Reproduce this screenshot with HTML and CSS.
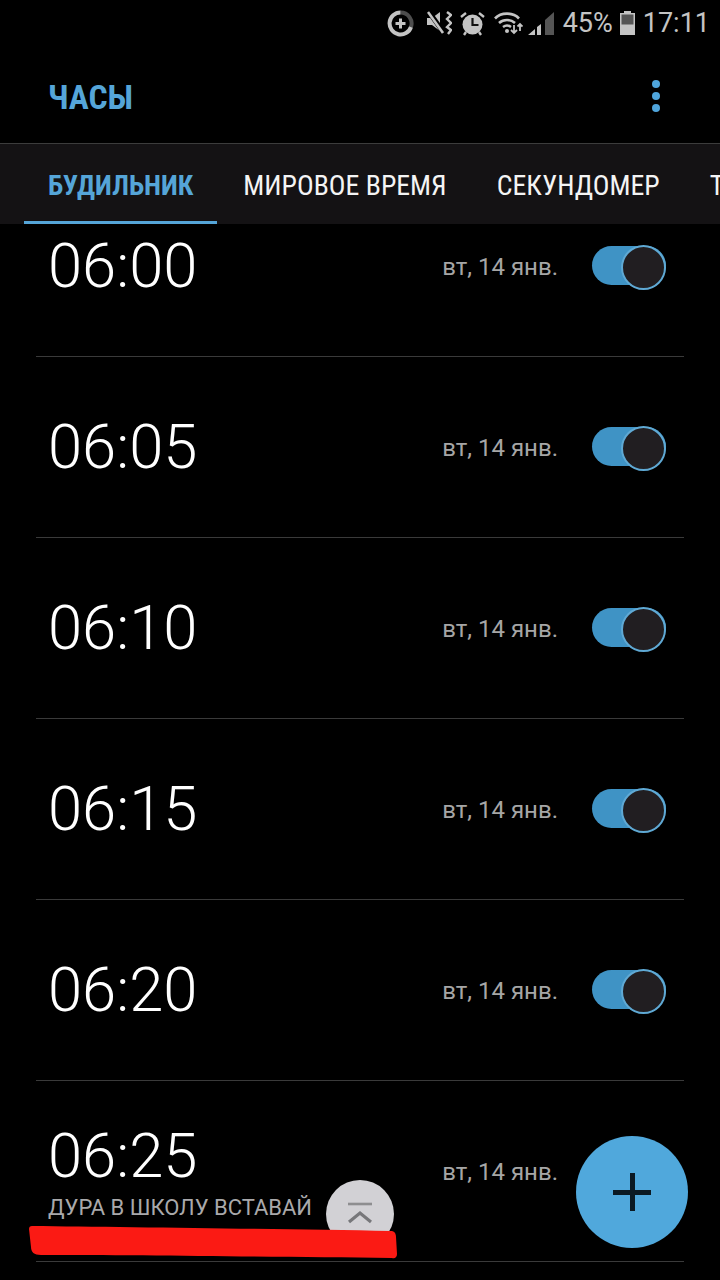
FILE: index.html
```html
<!DOCTYPE html>
<html lang="ru">
<head>
<meta charset="utf-8">
<title>Часы</title>
<link rel="stylesheet" href="styles.css">
</head>
<body>
<div class="screen">
  <div class="status">
    <svg class="ico ico-data" width="27" height="27" viewBox="0 0 27 27" fill="none">
      <path d="M13.5 2.5A11 11 0 0 1 24 17" stroke="#4d4d4d" stroke-width="4"/>
      <path d="M24 17A11 11 0 1 1 13.5 2.5" stroke="#c4c4c4" stroke-width="4"/>
      <path d="M13.5 8.5v10M8.5 13.5h10" stroke="#c4c4c4" stroke-width="3"/>
    </svg>
    <svg class="ico ico-mute" width="25" height="24" viewBox="0 0 25 24" fill="none">
      <path d="M0 7h5l8-6v19l-8-6H0z" fill="#c4c4c4"/>
      <path d="M2 1l15 21" stroke="#000" stroke-width="5"/>
      <path d="M1 1l15 21" stroke="#c4c4c4" stroke-width="2.6"/>
      <path d="M20 1l4 3-4 4 4 4-4 4 4 3-3 4" stroke="#c4c4c4" stroke-width="2.4"/>
    </svg>
    <svg class="ico ico-alarm" width="25" height="25" viewBox="0 0 25 25" fill="none">
      <circle cx="12.5" cy="13.5" r="10" fill="#c4c4c4"/>
      <path d="M12.5 7v7h6" stroke="#111" stroke-width="2.2"/>
      <path d="M1 6l5-4M24 6l-5-4M4 24l2-3M21 24l-2-3" stroke="#c4c4c4" stroke-width="2.4"/>
    </svg>
    <svg class="ico ico-wifi" width="29" height="24" viewBox="0 0 29 24" fill="none">
      <path d="M1 7.5C7 1 19 1 25 7.5" stroke="#c4c4c4" stroke-width="2.6"/>
      <path d="M5 12C9.500 8 16.500 8 21 12" stroke="#c4c4c4" stroke-width="2.6"/>
      <path d="M9 16c2.500-2 5.500-2 8 0" stroke="#c4c4c4" stroke-width="2.4"/>
      <circle cx="13" cy="20" r="2" fill="#c4c4c4"/>
      <path d="M20 14v8m-3-3l3 3 3-3" stroke="#c4c4c4" stroke-width="1.800"/>
      <path d="M26 20v-7m-2.500 2.500l2.500-2.500 2.500 2.500" stroke="#c4c4c4" stroke-width="1.800"/>
    </svg>
    <svg class="ico ico-signal" width="26" height="24" viewBox="0 0 26 24" fill="none">
      <path d="M17 9L26 1v23h-9z" fill="#555"/>
      <path d="M0 24l7-6v6zM9 16l4-3v11H9z" fill="#c4c4c4"/>
    </svg>
    <span class="stat-text stat-pct">45%</span>
    <svg class="ico ico-batt" width="15" height="24" viewBox="0 0 15 24">
      <path d="M4 0h7v2h4v22H0V2h4z" fill="#c4c4c4"/>
      <rect x="1.500" y="3.500" width="12" height="10" fill="#555"/>
    </svg>
    <span class="stat-text stat-time">17:11</span>
  </div>

  <header class="appbar">
    <h1 class="app-title">ЧАСЫ</h1>
    <div class="kebab"><i></i><i></i><i></i></div>
  </header>

  <nav class="tabs">
    <a class="tab tab-active">БУДИЛЬНИК</a>
    <a class="tab">МИРОВОЕ ВРЕМЯ</a>
    <a class="tab">СЕКУНДОМЕР</a>
    <a class="tab">ТАЙМЕР</a>
  </nav>

  <main class="alarms">
    <div class="alarm"><div class="when"><div class="time">06:00</div></div><span class="date">вт, 14 янв.</span><span class="switch"></span></div>
    <div class="alarm"><div class="when"><div class="time">06:05</div></div><span class="date">вт, 14 янв.</span><span class="switch"></span></div>
    <div class="alarm"><div class="when"><div class="time">06:10</div></div><span class="date">вт, 14 янв.</span><span class="switch"></span></div>
    <div class="alarm"><div class="when"><div class="time">06:15</div></div><span class="date">вт, 14 янв.</span><span class="switch"></span></div>
    <div class="alarm"><div class="when"><div class="time">06:20</div></div><span class="date">вт, 14 янв.</span><span class="switch"></span></div>
    <div class="alarm"><div class="when when-labeled"><div class="time">06:25</div><div class="label">ДУРА В ШКОЛУ ВСТАВАЙ</div></div><span class="date">вт, 14 янв.</span><span class="switch"></span></div>
  </main>

  <button class="to-top" aria-label="Наверх">
    <svg width="28" height="24" viewBox="0 0 28 24" fill="none">
      <path d="M2 2h24" stroke="#8e8e90" stroke-width="2.600"/>
      <path d="M3 20L14 11l11 9" stroke="#77777a" stroke-width="3.200"/>
    </svg>
  </button>
  <svg class="scribble" width="372" height="36" viewBox="0 0 372 36">
    <path d="M3 1C90 2 250 4 362 6c3 0 5 2 5 6l1 17c0 3-2 5-5 4C250 32 110 30 12 30C5 30 2 27 2 22L0 4C0 2 1 1 3 1z" fill="#fb1a14"/>
  </svg>
  <button class="fab" aria-label="Добавить"><span class="plus"></span></button>
</div>
</body>
</html>
```

FILE: styles.css
```css
* { box-sizing: border-box; }

html, body {
  margin: 0;
  padding: 0;
  background: #000;
}

.screen {
  position: relative;
  width: 720px;
  height: 1280px;
  overflow: hidden;
  background: #000;
  display: flex;
  flex-direction: column;
  font-family: Roboto, "Noto Sans", sans-serif;
}

/* status bar */
.status {
  flex: none;
  height: 52px;
  padding: 0 10px 6px 0;
  display: flex;
  justify-content: flex-end;
  align-items: center;
}
.ico { flex: none; display: block; }
.ico-mute { margin-left: 13px; }
.ico-alarm { margin-left: 8px; }
.ico-wifi { margin-left: 9px; }
.ico-signal { margin-left: 5px; }
.ico-batt { margin-left: 7px; }
.stat-text {
  color: #c4c4c4;
  font-size: 27px;
  line-height: 34px;
}
.stat-pct { margin-left: 9px; }
.stat-time { margin-left: 8px; }

/* app bar */
.appbar {
  flex: none;
  height: 92px;
  padding: 0 48px;
  display: flex;
  justify-content: space-between;
  align-items: center;
  border-bottom: 1px solid #3c3c3c;
}
.app-title {
  margin: 0 0 1px;
  color: #55a5d8;
  font-size: 33.500px;
  font-weight: 700;
  font-stretch: 87%;
}
.kebab {
  display: flex;
  flex-direction: column;
  gap: 4px;
  margin: 0 12px 3px 0;
}
.kebab i {
  width: 8px;
  height: 8px;
  border-radius: 50%;
  background: #4fa5dc;
}

/* tabs */
.tabs {
  flex: none;
  height: 80px;
  padding-left: 24px;
  display: flex;
  gap: 2px;
  background: #141214;
  overflow: hidden;
}
.tab {
  flex: none;
  padding: 0 24px;
  line-height: 84px;
  color: #f4f4f4;
  font-size: 27.800px;
  font-stretch: 87%;
  white-space: nowrap;
  border-bottom: 3px solid transparent;
}
.tab-active {
  color: #55a5d8;
  font-size: 27.600px;
  font-weight: 700;
  border-bottom-color: #55a5d8;
}

/* alarm list, scrolled so the first row is cut by the tabs */
.alarms {
  flex: 1;
  min-height: 0;
  overflow: hidden;
  padding: 0 36px;
}
.alarm {
  height: 181px;
  padding: 0 18px 0 12px;
  display: flex;
  align-items: center;
  border-bottom: 1px solid #3a3a3a;
}
.alarm:first-child { margin-top: -48px; }
.when { flex: 1; min-width: 0; }
.when-labeled { padding-top: 4px; }
.time {
  color: #fff;
  font-size: 61.500px;
  font-weight: 300;
  line-height: 70px;
}
.label {
  color: #a9a9ab;
  font-size: 22px;
  line-height: 34px;
  white-space: nowrap;
}
.date {
  margin: 2px 34px 0 0;
  color: #a6a6a6;
  font-size: 24px;
}
.switch {
  position: relative;
  width: 74px;
  height: 39px;
  margin-bottom: 1px;
  border-radius: 20px;
  background: #3f93c5;
}
.switch::after {
  content: "";
  position: absolute;
  right: 0;
  top: -1px;
  width: 41px;
  height: 41px;
  border-radius: 50%;
  background: #211e21;
  border: 2px solid #5fa9d4;
}

/* floating controls */
.to-top {
  position: absolute;
  left: 326px;
  top: 1180px;
  width: 68px;
  height: 68px;
  padding: 0;
  border: 0;
  border-radius: 50%;
  background: #d2d1d5;
  display: flex;
  align-items: center;
  justify-content: center;
}
.scribble {
  position: absolute;
  left: 29px;
  top: 1225px;
}
.fab {
  position: absolute;
  left: 576px;
  top: 1136px;
  width: 112px;
  height: 112px;
  padding: 0;
  border: 0;
  border-radius: 50%;
  background: #50a8dc;
  display: flex;
  align-items: center;
  justify-content: center;
}
.plus {
  position: relative;
  width: 38px;
  height: 38px;
  background:
    linear-gradient(#0b1a24, #0b1a24) center / 5px 38px no-repeat,
    linear-gradient(#0b1a24, #0b1a24) center / 38px 5px no-repeat;
}
```
